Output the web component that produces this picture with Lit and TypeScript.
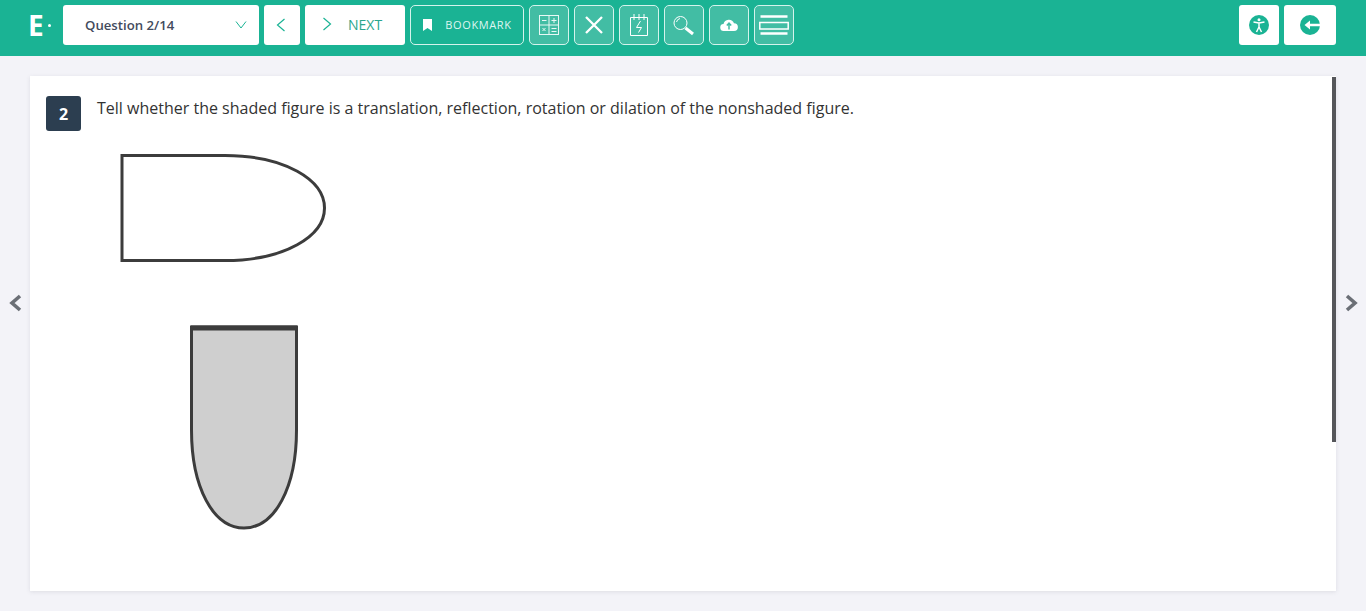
import { LitElement, html, css, svg } from "lit";
import { customElement } from "lit/decorators.js";

const ic = (content: unknown, size = 30) => html`<svg width=${size} height=${size} viewBox="0 0 30 30" fill="none" stroke="#fff" stroke-width="1">${content}</svg>`;

@customElement("app-root")
export class AppRoot extends LitElement {
  static styles = css`
    :host { display: block; width: 1366px; height: 611px; background: #f3f3f8; font-family: "Open Sans", sans-serif; position: relative; overflow: hidden; }
    header { height: 56px; background: #1ab394; box-sizing: border-box; padding: 5px 30px 0; display: flex; gap: 5px; align-items: flex-start; }
    .logo { width: 28px; height: 40px; display: flex; align-items: center; color: #fff; font-weight: 700; font-size: 28px; line-height: 40px; gap: 3px; margin-left: -2px; margin-right: 2px; }
    .logo i { width: 3px; height: 3px; border-radius: 50%; background: #fff; display: block; margin-left: 1px; }
    .btn { height: 40px; box-sizing: border-box; background: #fff; border-radius: 3px; display: flex; align-items: center; color: #1ab394; flex: none; }
    .select { width: 196px; padding: 0 12px 0 22px; justify-content: space-between; color: #434b5d; font-size: 13.2px; font-weight: 600; }
    .prev { width: 36px; padding-left: 12px; }
    .next { width: 100px; padding-left: 17px; gap: 16px; font-size: 14px; color: #2aa58c; }
    .next span { margin-top: -1px; }
    .next svg { margin-top: -2px; }
    .outline { height: 40px; box-sizing: border-box; border: 1px solid #d4f3ec; border-radius: 5px; display: flex; align-items: center; justify-content: center; flex: none; color: #fff; }
    .bookmark { width: 114px; gap: 12px; background: #1ab394; font-size: 11px; font-weight: 500; letter-spacing: .62px; color: #dff6f1; }
    .bookmark span { margin-top: -1px; }
    .tool { width: 40px; background: #42bda4; }
    .spacer { flex: 1; }
    .round { width: 40px; justify-content: center; }
    .back { width: 52px; justify-content: center; }
    main { padding: 20px 30px; }
    .card { height: 515px; background: #fff; box-sizing: border-box; padding: 20px 16px; position: relative; box-shadow: 0 1px 4px rgba(120,120,140,.18); display: flex; gap: 16px; }
    .scroll { position: absolute; top: 1px; right: 0; width: 4px; height: 365px; background: #55565a; }
    .num { width: 35px; height: 35px; flex: none; border-radius: 3px; background: #2c3e50; color: #fff; font-weight: 700; font-size: 16px; display: flex; align-items: center; justify-content: center; }
    .text { font-size: 16px; line-height: 24px; color: #333; }
    .q { display: block; }
    .figs { display: block; margin: 0 0 0 -16px; filter: blur(0.6px); }
    .side { position: absolute; top: 294px; }
    .side.l { left: 8px; }
    .side.r { left: 1343px; }
  `;

  render() {
    return html`
      <header>
        <div class="logo">E<i></i></div>
        <div class="btn select">Question 2/14
          <svg width="12" height="10" viewBox="0 0 12 10" fill="none" stroke="#1ab394" stroke-width="1"><path d="M1 1.500 6 8l5-6.500"/></svg>
        </div>
        <div class="btn prev"><svg width="10" height="14" viewBox="0 0 10 14" fill="none" stroke="#1ab394" stroke-width="1.200"><path d="M8.500 1 1.500 7l7 6"/></svg></div>
        <div class="btn next"><svg width="10" height="14" viewBox="0 0 10 14" fill="none" stroke="#1ab394" stroke-width="1.200"><path d="M1.500 1l7 6-7 6"/></svg><span>NEXT</span></div>
        <div class="outline bookmark">
          <svg width="11" height="12" viewBox="0 0 11 12" fill="#fff"><path d="M1 0h9v12L5.500 9 1 12z"/></svg>
          <span>BOOKMARK</span>
        </div>
        <div class="outline tool">${ic(svg`<g stroke="#e8f8f5"><rect x="5.500" y="5.500" width="19" height="19" /><path d="M15 5.500v19M5.500 15h19"/><path d="M8 10.500h4.500M17.500 10.500h5M20 8v5M8.500 18l3 3M11.500 18l-3 3M17.500 18.500h5M17.500 21.500h5"/></g>`)}</div>
        <div class="outline tool">${ic(svg`<path d="M7 7l16 16M23 7 7 23" stroke-width="2.300"/>`)}</div>
        <div class="outline tool">${ic(svg`<path d="M6.500 7.500h17v18h-17zM10 4v6M15 4v6M20 4v6M16.500 11l-4 6.500h5l-3 5"/>`)}</div>
        <div class="outline tool">${ic(svg`<circle cx="11.500" cy="13" r="6.500"/><path d="M16.500 18 24 24" stroke-width="3"/><path d="M7.500 12a4.500 4.500 0 0 1 3.500-3.500"/>`)}</div>
        <div class="outline tool">${ic(svg`<path d="M10 21a3.500 3.500 0 0 1-.5-7 5.500 5.500 0 0 1 10.500-.8 3.900 3.900 0 0 1 0 7.800z" fill="#fff" stroke="none"/><path d="M15 19.500v-6M12.800 15.500 15 13.200l2.200 2.300" stroke="#42bda4" stroke-width="1.500"/>`)}</div>
        <div class="outline tool">${ic(svg`<path d="M1.500 6.500h27M1.500 23.500h27" stroke-width="2.400"/><rect x="0.800" y="12.500" width="28.400" height="6.500" stroke-width="1.500"/>`)}</div>
        <div class="spacer"></div>
        <div class="btn round"><svg width="20" height="20" viewBox="0 0 20 20"><circle cx="10" cy="10" r="10" fill="#1ab394"/><g fill="none" stroke="#fff" stroke-width="1.500"><path d="M4.500 7 10 8l5.500-1M10 8v4M10 12l-2.500 5M10 12l2.500 5"/></g><circle cx="10" cy="4.700" r="1.500" fill="#fff"/></svg></div>
        <div class="btn back"><svg width="20" height="20" viewBox="0 0 20 20"><circle cx="10" cy="10" r="10" fill="#1ab394"/><path d="M10 5.500 4.500 10l5.500 4.500v-3.200h10v-2.600H10z" fill="#fff"/></svg></div>
      </header>
      <main>
        <div class="card">
          <div class="num">2</div>
          <div class="q">
            <div class="text">Tell whether the shaded figure is a translation, reflection, rotation or dilation of the nonshaded figure.</div>
            <svg class="figs" width="260" height="420" viewBox="0 0 260 420" fill="none">
              <g transform="translate(-81 -120)" stroke="#3c3c3c">
                <path d="M122 155.500H225C285 155.500 324.500 180 324.500 208S285 260.500 225 260.500H122Z" stroke-width="3"/>
                <path d="M191.500 327H296.500V430C296.500 487 275 528 244 528S191.500 487 191.500 430Z" fill="#cfcfcf" stroke-width="3"/>
                <path d="M191 328H297" stroke-width="5"/>
              </g>
            </svg>
          </div>
          <div class="scroll"></div>
        </div>
      </main>
      <svg class="side l" width="16" height="18" viewBox="0 0 16 18" fill="none" stroke="#6b6f76" stroke-width="3.600"><path d="M12 2 4 9l8 7"/></svg>
      <svg class="side r" width="16" height="18" viewBox="0 0 16 18" fill="none" stroke="#6b6f76" stroke-width="3.600"><path d="M4 2l8 7-8 7"/></svg>
    `;
  }
}
